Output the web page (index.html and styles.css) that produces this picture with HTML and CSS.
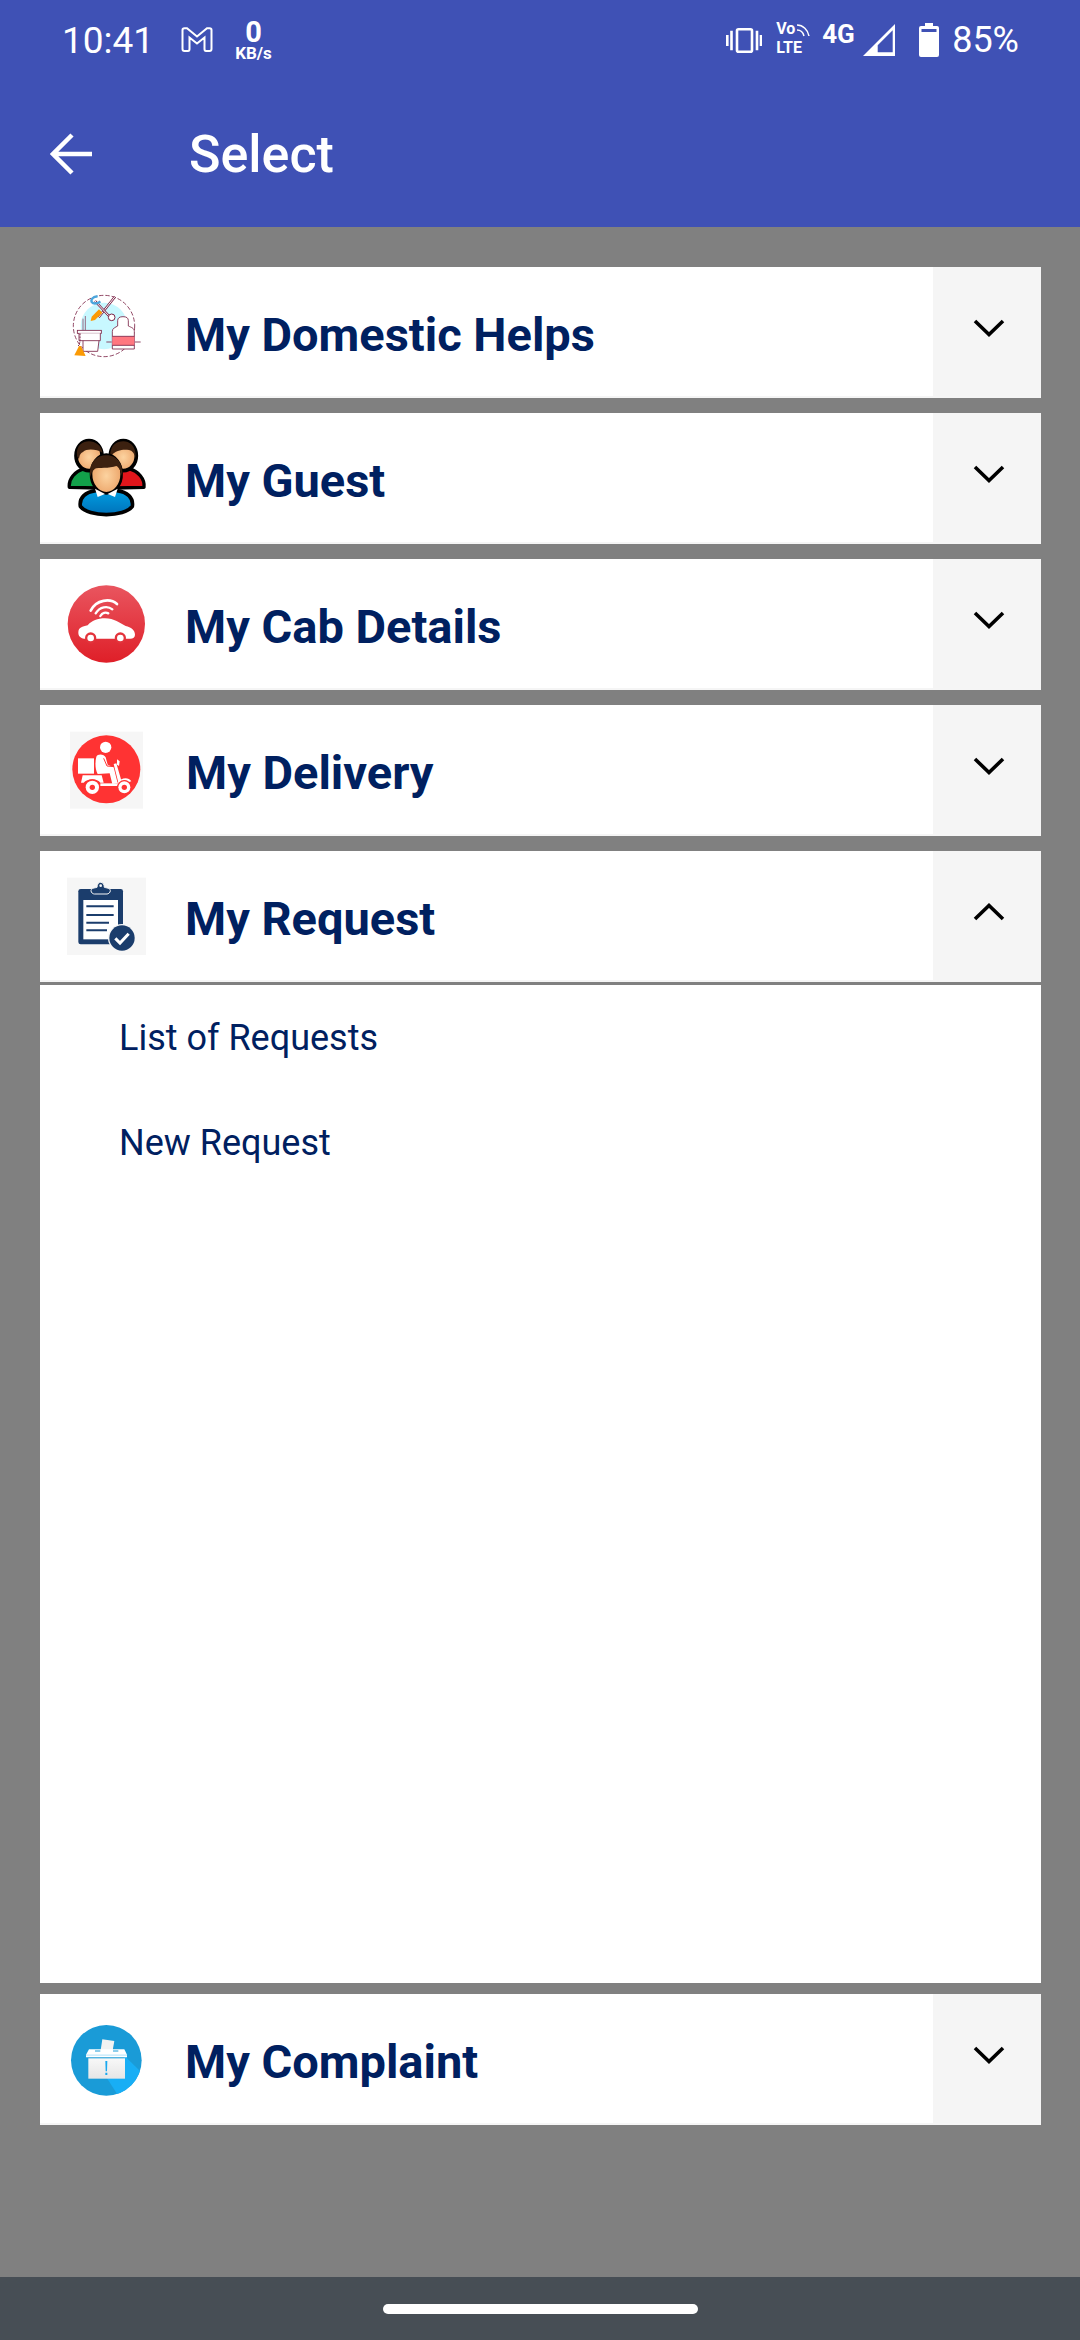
FILE: index.html
```html
<!DOCTYPE html>
<html lang="en">
<head>
<meta charset="utf-8">
<title>Select</title>
<link rel="stylesheet" href="styles.css">
</head>
<body>
<div class="screen">
  <header class="appbar">
    <div class="status">
      <span class="clock">10:41</span>
      <svg class="st-gmail" viewBox="0 0 32 25"><path d="M1.500 3Q1.500 1.200 3.500 1.200H6L16 9.500L26 1.200H28.500Q30.500 1.200 30.500 3V22Q30.500 24 28.500 24H25Q23.500 24 23.500 22V10.500L16 16.500L8.500 10.500V22Q8.500 24 7 24H3.500Q1.500 24 1.500 22Z" fill="none" stroke="#fff" stroke-width="2"/></svg>
      <div class="speed"><span class="speed-num">0</span><span class="speed-unit">KB/s</span></div>
      <span class="st-spacer"></span>
      <svg class="st-vib" viewBox="0 0 36 25"><g fill="none" stroke="#fff" stroke-width="2.600"><rect x="11" y="1.300" width="15" height="22.400" rx="1.500"/><path d="M5.500 2.700V22.300M1.300 7V18M31 2.700V22.300M35 7V18"/></g></svg>
      <div class="volte"><span class="vo">Vo</span><span class="lte">LTE</span>
        <svg class="vo-arc" viewBox="0 0 14 14"><path d="M1 2C7 2 12 7 13 13M1 7C4 7 7 9 8 13" fill="none" stroke="#fff" stroke-width="1.500"/></svg>
      </div>
      <span class="net">4G</span>
      <svg class="st-signal" viewBox="0 0 32 32"><path d="M32 0V32H0ZM14.700 21.300V28.300H29.700V6.300Z" fill="#fff" fill-rule="evenodd"/></svg>
      <svg class="st-batt" viewBox="0 0 20 34"><path d="M6 0H14V3H18Q20 3 20 5V32Q20 34 18 34H2Q0 34 0 32V5Q0 3 2 3H6Z" fill="#fff"/><rect x="2.500" y="6" width="15" height="3" fill="#3f51b5"/></svg>
      <span class="pct">85%</span>
    </div>
    <div class="toolbar">
      <svg class="back" viewBox="0 0 42 42"><path d="M42 21H3M22 2L3 21L22 40" fill="none" stroke="#fff" stroke-width="4.500"/></svg>
      <h1 class="title">Select</h1>
    </div>
  </header>

  <main class="list">
    <section class="row">
      <svg class="ico" viewBox="0 0 240 240">
        <circle cx="111" cy="102" r="70" fill="#c8f8ff"/>
        <circle cx="111" cy="102" r="92" fill="none" stroke="#7b2346" stroke-width="2.500" stroke-dasharray="13 6"/>
        <path d="M95 76L144 14" stroke="#7b2346" stroke-width="7" fill="none"/>
        <path d="M95 76L144 14" stroke="#fff" stroke-width="3" fill="none"/>
        <path d="M84 27L126 72" stroke="#7b2346" stroke-width="7" fill="none"/>
        <path d="M84 27L126 72" stroke="#fff" stroke-width="3" fill="none"/>
        <circle cx="134" cy="76" r="10" fill="#fff" stroke="#7b2346" stroke-width="3"/>
        <path d="M92 14C83 12 70 20 74 30C80 38 94 34 100 28" fill="none" stroke="#4aa6dd" stroke-width="7"/>
        <path d="M71 87L74 74L96 52L106 62L84 84Z" fill="#fb9a05"/>
        <path d="M136 171V118C136 108 146 106 152 102V86Q152 74 168 74Q184 74 184 86V102C192 106 202 108 202 118V171Z" fill="#fff" stroke="#7b2346" stroke-width="2.500"/>
        <rect x="136" y="133" width="66" height="27" fill="#ff7780"/>
        <path d="M136 133H202M136 160H202" stroke="#7b2346" stroke-width="2.500"/>
        <path d="M118 150H134M204 150H221" stroke="#7b2346" stroke-width="2.500"/>
        <path d="M55 72V115M48 80V115" stroke="#7b2346" stroke-width="2" fill="none"/>
        <rect x="31" y="115" width="72" height="9" fill="#fff" stroke="#7b2346" stroke-width="2.500"/>
        <path d="M36 124V146H100V124M48 146V178H92L96 146" fill="#fff" stroke="#7b2346" stroke-width="2.500"/>
        <path d="M39 124V150L34 162" fill="none" stroke="#7b2346" stroke-width="3" stroke-dasharray="6 3"/>
        <path d="M22 190L36 162H42L56 192Z" fill="#fb9a05"/>
      </svg>
      <h2 class="row-title">My Domestic Helps</h2>
      <div class="toggle"><svg class="chev" viewBox="0 0 32 18"><path d="M2 2L16 15.500L30 2" fill="none" stroke="#000" stroke-width="3.600"/></svg></div>
    </section>

    <section class="row">
      <svg class="ico" viewBox="0 0 240 240">
        <defs>
          <radialGradient id="skin" cx=".5" cy=".55" r=".6"><stop offset="0" stop-color="#fcd3a0"/><stop offset="1" stop-color="#e99c5f"/></radialGradient>
          <linearGradient id="blue" x1="0" y1="0" x2="0" y2="1"><stop offset="0" stop-color="#009de0"/><stop offset="1" stop-color="#0072ba"/></linearGradient>
        </defs>
        <path d="M7 148C4 122 24 100 52 92L80 92L95 150Z" fill="#12a04a" stroke="#000" stroke-width="10" stroke-linejoin="round"/>
        <path d="M231 148C234 122 214 100 186 92L156 92L140 150Z" fill="#e0151b" stroke="#000" stroke-width="10" stroke-linejoin="round"/>
        <ellipse cx="66" cy="53" rx="39" ry="45" fill="url(#skin)" stroke="#000" stroke-width="11"/>
        <ellipse cx="169" cy="53" rx="39" ry="45" fill="url(#skin)" stroke="#000" stroke-width="11"/>
        <path d="M30 54C26 22 48 10 66 10C84 10 104 22 106 44C90 34 60 30 48 42C40 46 38 50 36 64Z" fill="#3c2110"/>
        <path d="M130 54C128 22 150 10 169 10C186 10 208 22 206 60C202 46 196 38 186 36C170 34 150 34 130 54Z" fill="#3c2110"/>
        <path d="M40 205C36 178 56 162 86 158H150C180 162 200 178 196 205C172 238 64 238 40 205Z" fill="url(#blue)" stroke="#000" stroke-width="11" stroke-linejoin="round"/>
        <ellipse cx="118" cy="108" rx="46" ry="58" fill="url(#skin)" stroke="#000" stroke-width="8"/>
        <path d="M84 152L92 177L114 168ZM152 152L144 177L122 168Z" fill="#fff"/>
        <path d="M70 118C64 72 90 52 118 52C146 52 170 72 166 118C162 100 156 88 148 84C128 92 92 88 84 92C76 98 72 106 70 118Z" fill="#3c2110"/>
      </svg>
      <h2 class="row-title">My Guest</h2>
      <div class="toggle"><svg class="chev" viewBox="0 0 32 18"><path d="M2 2L16 15.500L30 2" fill="none" stroke="#000" stroke-width="3.600"/></svg></div>
    </section>

    <section class="row">
      <svg class="ico" viewBox="0 0 240 240">
        <defs><linearGradient id="cab" x1="0" y1="0" x2="0" y2="1"><stop offset="0" stop-color="#e9555f"/><stop offset="1" stop-color="#df1f28"/></linearGradient></defs>
        <circle cx="118" cy="120" r="116" fill="url(#cab)"/>
        <path d="M34 146C34 130 46 128 62 124C74 110 92 103 114 103C142 103 158 118 176 126C192 130 204 138 204 152C204 160 198 164 190 164L180 164L56 164C44 164 34 158 34 146Z" fill="#fff"/>
        <circle cx="71" cy="162" r="17" fill="#e3333b"/><circle cx="71" cy="162" r="10" fill="#fff"/>
        <circle cx="160" cy="162" r="17" fill="#e3333b"/><circle cx="160" cy="162" r="10" fill="#fff"/>
        <g fill="none" stroke="#fff" stroke-linecap="round">
          <path d="M71 80C88 46 130 42 150 60" stroke-width="8"/>
          <path d="M86 88C98 68 122 64 136 76" stroke-width="7"/>
          <path d="M100 96C106 86 116 84 124 88" stroke-width="7"/>
        </g>
      </svg>
      <h2 class="row-title">My Cab Details</h2>
      <div class="toggle"><svg class="chev" viewBox="0 0 32 18"><path d="M2 2L16 15.500L30 2" fill="none" stroke="#000" stroke-width="3.600"/></svg></div>
    </section>

    <section class="row">
      <svg class="ico" viewBox="0 0 240 240">
        <rect x="9" y="5" width="219" height="231" fill="#f6f6f6"/>
        <circle cx="118" cy="118" r="102" fill="#ff3333"/>
        <rect x="33" y="85" width="48" height="46" fill="#fff"/>
        <circle cx="116" cy="52" r="17" fill="#fff"/>
        <path d="M88 80C92 70 112 72 116 82L122 104L140 112L152 160L136 162L128 130L92 132C84 118 84 96 88 80Z" fill="#fff"/>
        <path d="M110 85L120 108L142 110" fill="none" stroke="#ff3333" stroke-width="3"/>
        <path d="M47 136H104L110 158H100C92 144 60 144 50 158H42Z" fill="#fff"/>
        <path d="M100 160H155V168H100Z" fill="#fff"/>
        <path d="M140 102L148 100L162 148L168 160L156 166Z" fill="#fff"/>
        <path d="M151 158C160 144 184 138 193 154L186 156C176 148 164 150 158 162Z" fill="#fff"/>
        <path d="M150 88L158 94L156 108L150 104Z" fill="#fff"/>
        <circle cx="76" cy="172" r="24" fill="#ff3333"/><circle cx="76" cy="172" r="20" fill="#fff"/><circle cx="76" cy="172" r="8" fill="#ff3333"/>
        <circle cx="172" cy="172" r="22" fill="#ff3333"/><circle cx="172" cy="172" r="18" fill="#fff"/><circle cx="172" cy="172" r="8" fill="#ff3333"/>
      </svg>
      <h2 class="row-title row-title-delivery">My Delivery</h2>
      <div class="toggle"><svg class="chev" viewBox="0 0 32 18"><path d="M2 2L16 15.500L30 2" fill="none" stroke="#000" stroke-width="3.600"/></svg></div>
    </section>

    <section class="row row-open">
      <svg class="ico" viewBox="0 0 240 240">
        <rect x="0" y="5" width="237" height="232" fill="#f6f6f6"/>
        <rect x="34" y="39" width="134" height="166" rx="7" fill="#1b3d6c"/>
        <rect x="49" y="72" width="104" height="118" fill="#fff"/>
        <path d="M72 44C72 36 84 36 90 34C90 14 112 14 112 34C118 36 130 36 130 44C130 50 124 54 120 54H82C78 54 72 50 72 44Z" fill="#1b3d6c" stroke="#f6f6f6" stroke-width="3"/>
        <circle cx="101" cy="29" r="4" fill="#f6f6f6"/>
        <path d="M58 91H140M58 117H140M58 140H126M58 163H120" stroke="#1b3d6c" stroke-width="6"/>
        <circle cx="165" cy="186" r="42" fill="#f6f6f6"/>
        <circle cx="165" cy="186" r="38" fill="#1b3d6c"/>
        <path d="M145 187L159 201L185 173" fill="none" stroke="#fff" stroke-width="9"/>
      </svg>
      <h2 class="row-title">My Request</h2>
      <div class="toggle"><svg class="chev" viewBox="0 0 32 18"><path d="M2 16L16 2.500L30 16" fill="none" stroke="#000" stroke-width="3.600"/></svg></div>
    </section>

    <section class="panel">
      <div class="panel-item">List of Requests</div>
      <div class="panel-item">New Request</div>
    </section>

    <section class="row">
      <svg class="ico" viewBox="0 0 240 240">
        <defs><clipPath id="cp"><circle cx="118" cy="124" r="106"/></clipPath>
        <linearGradient id="box" x1="0" y1="0" x2="0" y2="1"><stop offset="0" stop-color="#f8f8f8"/><stop offset="1" stop-color="#e6e6e6"/></linearGradient></defs>
        <circle cx="118" cy="124" r="106" fill="#1a9bd7"/>
        <path d="M174 112L235 172L160 240L120 178Z" fill="#18aef5" clip-path="url(#cp)"/>
        <path d="M106 61L142 66L136 100H100Z" fill="#f2f2f2"/>
        <path d="M66 91H172L180 107V115H57V107Z" fill="#fff"/>
        <path d="M84 96H100M138 96H154" stroke="#1a9bd7" stroke-width="3"/>
        <rect x="57" y="107" width="123" height="2.500" fill="#9fdcf8"/>
        <rect x="64" y="118" width="110" height="61" fill="url(#box)"/>
        <path d="M115 126H121L120 157H116ZM115 161H121V168H115Z" fill="#1aa8ef"/>
      </svg>
      <h2 class="row-title">My Complaint</h2>
      <div class="toggle"><svg class="chev" viewBox="0 0 32 18"><path d="M2 2L16 15.500L30 2" fill="none" stroke="#000" stroke-width="3.600"/></svg></div>
    </section>
  </main>

  <footer class="navbar"><span class="pill"></span></footer>
</div>
</body>
</html>
```

FILE: styles.css
```css
* { box-sizing: border-box; }
html, body { margin: 0; padding: 0; }
body { font-family: Roboto, "Liberation Sans", sans-serif; }

.screen {
  width: 1080px;
  height: 2340px;
  background: #808080;
  display: flex;
  flex-direction: column;
}

.appbar { height: 227px; background: #3f51b5; color: #fff; flex: none; }

.status {
  height: 80px;
  display: flex;
  align-items: flex-start;
  padding-left: 62px;
}
.clock { font-size: 37px; line-height: 81px; width: 119px; }
.st-gmail { width: 32px; height: 25px; margin: 27px 21px 0 0; }
.speed { display: flex; flex-direction: column; align-items: center; width: 39px; margin-top: 18px; }
.speed-num { font-size: 29px; font-weight: 700; line-height: 28px; height: 27px; }
.speed-unit { font-size: 17px; font-weight: 700; line-height: 17px; }
.st-spacer { flex: 1; }
.st-vib { width: 36px; height: 25px; margin: 28px 14px 0 0; }
.volte { position: relative; width: 34px; margin: 20px 12px 0 0; display: flex; flex-direction: column; font-weight: 700; }
.vo { font-size: 16px; line-height: 18px; }
.lte { font-size: 16px; line-height: 17px; margin-top: 1px; }
.vo-arc { position: absolute; left: 20px; top: 3px; width: 14px; height: 14px; }
.net { font-size: 26px; font-weight: 700; line-height: 26px; width: 41px; margin-top: 21px; }
.st-signal { width: 32px; height: 32px; margin: 24px 24px 0 0; }
.st-batt { width: 20px; height: 34px; margin: 23px 13px 0 0; }
.pct { font-size: 36px; line-height: 81px; margin-right: 61px; }

.toolbar { height: 147px; display: flex; align-items: center; padding-left: 50px; }
.back { width: 42px; height: 42px; margin-right: 97px; }
.title { margin: 0; padding-top: 3px; font-size: 52px; font-weight: 500; line-height: 1; }

.list {
  flex: 1;
  display: flex;
  flex-direction: column;
  padding: 40px 39px 0 40px;
}

.row {
  height: 131px;
  flex: none;
  margin-bottom: 15px;
  background: #fff;
  border-bottom: 2px solid #f5f5f5;
  display: flex;
  align-items: center;
}
.row-open { margin-bottom: 0; }

.ico { width: 80px; height: 80px; margin-left: 27px; flex: none; }
.row-title {
  margin: 0 0 0 38px;
  padding-top: 5px;
  flex: 1;
  font-size: 47px;
  font-weight: 700;
  color: #002060;
  line-height: 1;
}
.row-title-delivery { margin-left: 39px; }

.toggle {
  width: 108px;
  height: 100%;
  background: #f5f5f5;
  flex: none;
  display: flex;
  align-items: center;
  justify-content: center;
  padding: 0 0 8px 3px;
}
.chev { width: 32px; height: 18px; }

.panel {
  height: 1001px;
  flex: none;
  background: #fff;
  border-top: 3px solid #808080;
  margin-bottom: 11px;
}
.panel-item {
  height: 105px;
  display: flex;
  align-items: center;
  padding-left: 79px;
  font-size: 36px;
  color: #002060;
}

.navbar {
  height: 63px;
  flex: none;
  background: #474e55;
  display: flex;
  justify-content: center;
  padding-top: 27px;
}
.pill { width: 315px; height: 10px; border-radius: 5px; background: #fff; }
```
